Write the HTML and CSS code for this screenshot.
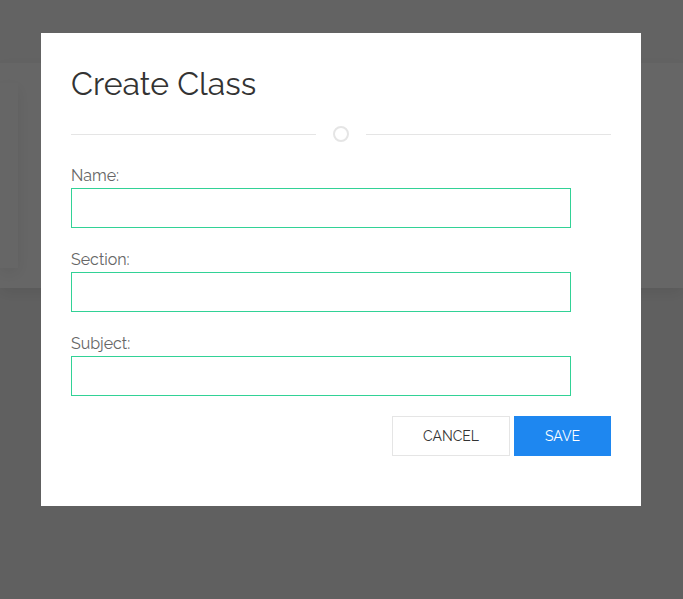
FILE: index.html
```html
<!DOCTYPE html>
<html lang="en">
<head>
<meta charset="utf-8">
<title>Create Class</title>
<link rel="stylesheet" href="styles.css">
</head>
<body>
<div class="page">
  <div class="topbar"></div>
  <div class="section"><div class="card"></div></div>
</div>
<div class="overlay">
  <form class="dialog" role="dialog" aria-labelledby="title">
    <h2 class="title" id="title">Create Class</h2>
    <div class="divider"><span class="ring"></span></div>
    <div class="field"><label for="name">Name:</label><input id="name" type="text"></div>
    <div class="field"><label for="section">Section:</label><input id="section" type="text"></div>
    <div class="field"><label for="subject">Subject:</label><input id="subject" type="text"></div>
    <div class="actions">
      <button class="button" type="button">CANCEL</button>
      <button class="button primary" type="button">SAVE</button>
    </div>
  </form>
</div>
</body>
</html>
```
FILE: styles.css
```css
* { box-sizing: border-box; }
body {
  margin: 0;
  font-family: Raleway, Lato, sans-serif;
  font-size: 16px;
  line-height: 24px;
  color: #666;
}
.page {
  min-height: 100vh;
  background: #f1f1f1;
}
.topbar {
  height: 63px;
  background: #f8f8f8;
}
.section {
  height: 225px;
  padding-top: 20px;
  background: #fff;
  box-shadow: 0 5px 15px rgba(0, 0, 0, 0.08);
}
.card {
  width: 18px;
  height: 185px;
  background: #fff;
  box-shadow: 0 5px 15px rgba(0, 0, 0, 0.08);
}
.overlay {
  position: fixed;
  inset: 0;
  padding: 33px 16px 33px 15px;
  background: rgba(0, 0, 0, 0.6);
}
.dialog {
  max-width: 600px;
  margin: 0 auto;
  padding: 30px 30px 50px;
  background: #fff;
}
.title {
  margin: 0 0 20px;
  font-size: 32px;
  line-height: 42px;
  font-weight: 400;
  color: #333;
}
.divider {
  display: flex;
  align-items: center;
  gap: 17px;
  height: 18px;
  margin-bottom: 21px;
}
.divider::before, .divider::after {
  content: "";
  flex: 1;
  border-top: 1px solid #e5e5e5;
}
.ring {
  width: 16px;
  height: 16px;
  border: 2px solid #e5e5e5;
  border-radius: 50%;
}
.field { margin-bottom: 20px; }
.field label { display: block; }
.field input {
  display: block;
  width: 500px;
  max-width: 100%;
  height: 40px;
  padding: 0 10px;
  border: 1px solid #32d296;
  border-radius: 0;
  background: #fff;
  font: inherit;
}
.actions {
  display: flex;
  justify-content: flex-end;
  gap: 4px;
}
.button {
  padding: 0 30px;
  border: 1px solid #e5e5e5;
  background: #fff;
  color: #333;
  font-family: inherit;
  font-size: 14px;
  line-height: 38px;
}
.primary {
  border-color: #1e87f0;
  background: #1e87f0;
  color: #fff;
}
```
